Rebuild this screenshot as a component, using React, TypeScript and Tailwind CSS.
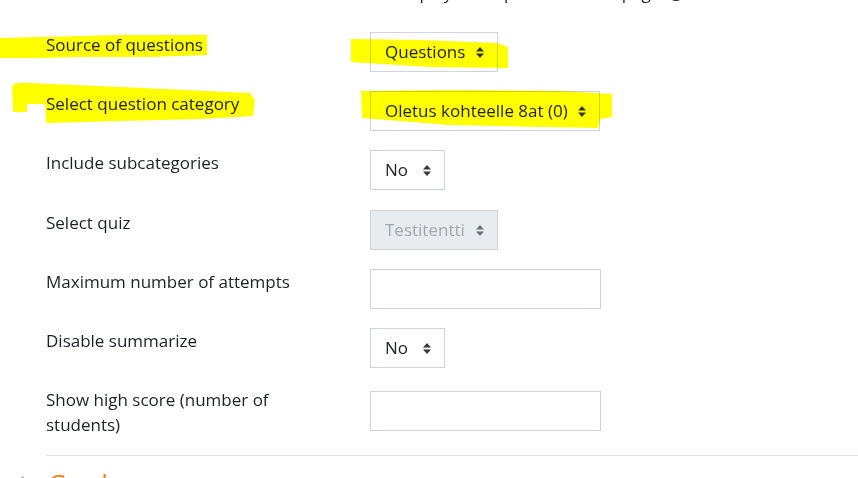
import React from "react";

/* ----------------------------
  SMALL PARTS
----------------------------- */
const SortArrows = ({ muted = false }: { muted?: boolean }) => (
  <svg
    width="8"
    height="11"
    viewBox="0 0 8 11"
    className={muted ? "text-[#6a737b]" : "text-[#343a40]"}
  >
    <path d="M4 0 L8 4.4 L0 4.4 Z" fill="currentColor" />
    <path d="M0 6.6 L8 6.6 L4 11 Z" fill="currentColor" />
  </svg>
);

type SelectProps = { value: string; width: string; disabled?: boolean };

const FakeSelect = ({ value, width, disabled }: SelectProps) => (
  <div
    className={`${width} h-[40px] border border-[#ced4da] flex items-center justify-between pl-[14px] pr-[13px] ${
      disabled ? "bg-[#e9ecef] text-[#a3a8ae]" : "bg-white text-[#1d2125]"
    }`}
  >
    <span className="whitespace-nowrap">{value}</span>
    <SortArrows muted={disabled} />
  </div>
);

const TextBox = () => (
  <div className="w-[231px] h-[40px] border border-[#ced4da] bg-white" />
);

const Row = ({
  label,
  children,
  controlClass = "",
  gap = "mb-[19px]",
}: {
  label: string;
  children: React.ReactNode;
  controlClass?: string;
  gap?: string;
}) => (
  <div className={`grid grid-cols-[324px_1fr] ${gap}`}>
    <div className="pr-[58px] leading-[25px]">{label}</div>
    <div className={controlClass}>{children}</div>
  </div>
);

/* ----------------------------
  PAGE
----------------------------- */
export default function App() {
  return (
    <div className="relative w-full h-[478px] overflow-hidden bg-white text-[17px] text-[#1d2125] font-['Open_Sans',sans-serif]">
      {/* cut-off help line from above */}
      <div className="h-[32px] overflow-hidden pl-[376px]">
        <div className="-mt-[20px] leading-[25px] flex items-center whitespace-nowrap">
          <span>to display on all per whole test page</span>
          <span className="ml-[8px] w-[16px] h-[16px] rounded-full bg-[#1d2125]" />
        </div>
      </div>

      <div className="pl-[46px]">
        <Row label="Source of questions">
          <FakeSelect value="Questions" width="w-[128px]" />
        </Row>
        <Row label="Select question category">
          <FakeSelect value="Oletus kohteelle 8at (0)" width="w-[230px]" />
        </Row>
        <Row label="Include subcategories" gap="mb-[20px]">
          <FakeSelect value="No" width="w-[75px]" />
        </Row>
        <Row label="Select quiz">
          <FakeSelect value="Testitentti" width="w-[128px]" disabled />
        </Row>
        <Row label="Maximum number of attempts">
          <TextBox />
        </Row>
        <Row label="Disable summarize">
          <FakeSelect value="No" width="w-[75px]" />
        </Row>
        <Row
          label="Show high score (number of students)"
          controlClass="pt-[4px]"
          gap="mb-[18px]"
        >
          <TextBox />
        </Row>

        <div className="border-t border-[#dee2e6]" />
      </div>

      {/* next section heading */}
      <div className="flex items-start mt-[12px] pl-[19px]">
        <svg width="10" height="14" viewBox="0 0 10 14" className="mt-[8px] text-[#8f959e]">
          <path d="M3 1 L8 7 L3 13" fill="none" stroke="currentColor" strokeWidth="2" />
        </svg>
        <h3 className="ml-[19px] text-[26px] leading-[31px] text-[#f98012]">Grade</h3>
      </div>

      {/* yellow marker strokes */}
      <svg
        className="absolute inset-0 pointer-events-none mix-blend-multiply"
        width="858"
        height="478"
        viewBox="0 0 858 478"
      >
        <g fill="#ffff00">
          <path d="M0 38 L40 37 L120 35 L207 35 L207 55 L150 57 L80 57 L40 58 L0 58 Z" />
          <path d="M351 39 L420 40 L497 43 L508 47 L508 68 L430 67 L351 62 Z" />
          <path d="M12 87 Q12 82 30 83 L120 87 L250 93 L255 100 L253 116 L200 119 L120 121 L46 123 L45 104 L27 104 L27 112 L13 112 Z" />
          <path d="M361 91 L450 90 L560 91 L612 94 L612 117 L600 119 L598 128 L450 125 L362 118 Z" />
        </g>
      </svg>
    </div>
  );
}
